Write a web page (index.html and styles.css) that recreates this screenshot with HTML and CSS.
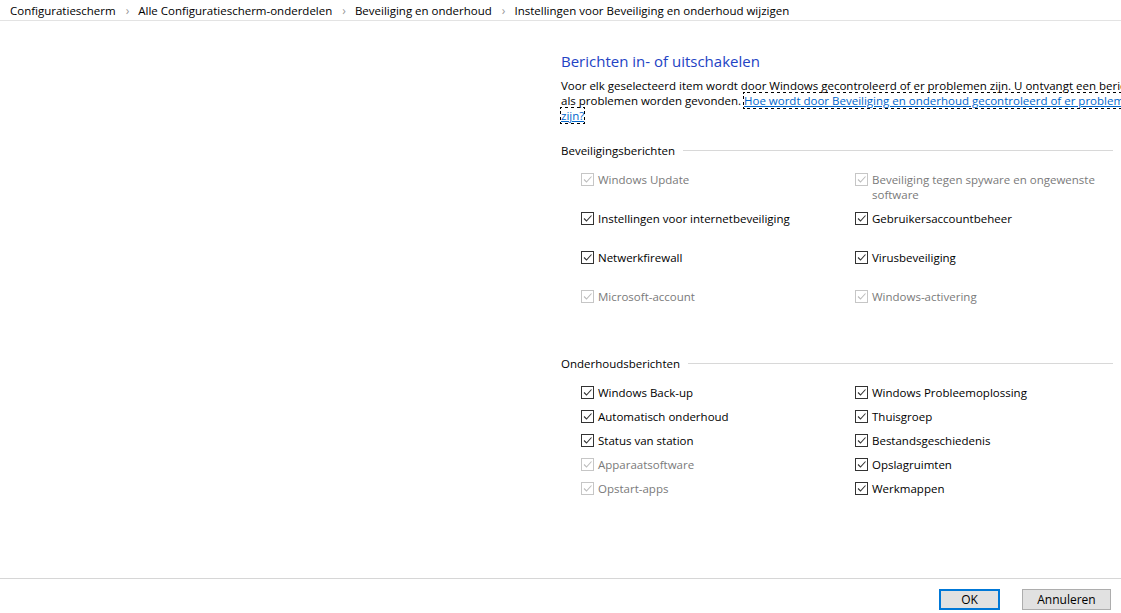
FILE: index.html
```html
<!DOCTYPE html>
<html lang="nl">
<head>
    <meta charset="UTF-8">
    <title>Instellingen voor Beveiliging en onderhoud wijzigen</title>
    <link rel="stylesheet" href="styles.css">
</head>
<body>
    <div class="window">
        <nav class="breadcrumb">
            <span>Configuratiescherm</span>
            <span class="sep">&#8250;</span>
            <span>Alle Configuratiescherm-onderdelen</span>
            <span class="sep">&#8250;</span>
            <span>Beveiliging en onderhoud</span>
            <span class="sep">&#8250;</span>
            <span>Instellingen voor Beveiliging en onderhoud wijzigen</span>
        </nav>

        <div class="content">
            <h1>Berichten in- of uitschakelen</h1>
            <p class="intro">Voor elk geselecteerd item wordt door Windows gecontroleerd of er problemen zijn. U ontvangt een bericht
                als problemen worden gevonden. <a href="#" class="help">Hoe wordt door Beveiliging en onderhoud gecontroleerd of er problemen zijn?</a></p>

            <div class="group">
                <div class="group-title"><span>Beveiligingsberichten</span></div>
                <div class="options security">
                    <label class="option disabled"><span class="box"></span><span>Windows Update</span></label>
                    <label class="option disabled"><span class="box"></span><span>Beveiliging tegen spyware en ongewenste software</span></label>
                    <label class="option"><span class="box"></span><span>Instellingen voor internetbeveiliging</span></label>
                    <label class="option"><span class="box"></span><span>Gebruikersaccountbeheer</span></label>
                    <label class="option"><span class="box"></span><span>Netwerkfirewall</span></label>
                    <label class="option"><span class="box"></span><span>Virusbeveiliging</span></label>
                    <label class="option disabled"><span class="box"></span><span>Microsoft-account</span></label>
                    <label class="option disabled"><span class="box"></span><span>Windows-activering</span></label>
                </div>
            </div>

            <div class="group maintenance-group">
                <div class="group-title"><span>Onderhoudsberichten</span></div>
                <div class="options maintenance">
                    <label class="option"><span class="box"></span><span>Windows Back-up</span></label>
                    <label class="option"><span class="box"></span><span>Windows Probleemoplossing</span></label>
                    <label class="option"><span class="box"></span><span>Automatisch onderhoud</span></label>
                    <label class="option"><span class="box"></span><span>Thuisgroep</span></label>
                    <label class="option"><span class="box"></span><span>Status van station</span></label>
                    <label class="option"><span class="box"></span><span>Bestandsgeschiedenis</span></label>
                    <label class="option disabled"><span class="box"></span><span>Apparaatsoftware</span></label>
                    <label class="option"><span class="box"></span><span>Opslagruimten</span></label>
                    <label class="option disabled"><span class="box"></span><span>Opstart-apps</span></label>
                    <label class="option"><span class="box"></span><span>Werkmappen</span></label>
                </div>
            </div>
        </div>

        <div class="footer">
            <button class="btn default">OK</button>
            <button class="btn">Annuleren</button>
        </div>
    </div>
</body>
</html>
```

FILE: styles.css
```css
html, body {
    margin: 0;
    padding: 0;
    overflow: hidden;
}

body {
    font-family: "Open Sans", "Noto Sans", sans-serif;
    font-size: 11.5px;
    color: #000;
    background-color: #fff;
}

.window {
    display: flex;
    flex-direction: column;
    width: 1121px;
    height: 613px;
}

.breadcrumb {
    display: flex;
    align-items: center;
    height: 20px;
    padding-left: 10px;
    border-bottom: 1px solid #e3e3e3;
    white-space: nowrap;
}

.breadcrumb .sep {
    color: #9a9a9a;
    font-size: 12px;
    margin: 0 9px 0 10px;
}

.content {
    flex: 1;
    padding-left: 561px;
}

h1 {
    margin: 30px 0 0;
    font-size: 15px;
    font-weight: normal;
    color: #2343c4;
    line-height: 20px;
}

.intro {
    width: 590px;
    margin: 7px 0 0;
    line-height: 15px;
}

.help {
    color: #0066cc;
    outline: 1px dotted #000;
}

.group {
    margin-top: 19px;
    width: 552px;
}

.maintenance-group {
    margin-top: 27px;
}

.group-title {
    display: flex;
    align-items: center;
    height: 16px;
}

.group-title::after {
    content: "";
    flex: 1;
    height: 1px;
    margin-left: 8px;
    background-color: #d8d8d8;
}

.options {
    display: grid;
    grid-template-columns: 274px 258px;
    padding-left: 20px;
}

.security {
    margin-top: 14px;
    grid-auto-rows: 39px;
}

.maintenance {
    margin-top: 14px;
    grid-auto-rows: 24px;
}

.option {
    display: flex;
    align-items: flex-start;
    line-height: 15px;
}

.box {
    flex: none;
    width: 11px;
    height: 11px;
    margin: 1px 4px 0 0;
    border: 1px solid #333;
    background: #fff url("data:image/svg+xml;utf8,<svg xmlns='http://www.w3.org/2000/svg' width='11' height='11'><path d='M2 5.5 L4.5 8 L9.5 2.5' fill='none' stroke='%23333' stroke-width='1.1'/></svg>") no-repeat center;
}

.option.disabled {
    color: #7a7a7a;
}

.option.disabled .box {
    border-color: #c6c6c6;
    background-image: url("data:image/svg+xml;utf8,<svg xmlns='http://www.w3.org/2000/svg' width='11' height='11'><path d='M2 5.5 L4.5 8 L9.5 2.5' fill='none' stroke='%23bdbdbd' stroke-width='1.1'/></svg>");
}

.footer {
    display: flex;
    justify-content: flex-end;
    gap: 22px;
    height: 35px;
    padding: 10px 10px 0 0;
    box-sizing: border-box;
    border-top: 1px solid #d6d6d6;
}

.btn {
    width: 89px;
    height: 21px;
    padding: 0;
    font-family: inherit;
    font-size: 12px;
    color: #000;
    background-color: #e1e1e1;
    border: 1px solid #adadad;
}

.btn.default {
    width: 61px;
    border: 2px solid #0078d7;
}
```
